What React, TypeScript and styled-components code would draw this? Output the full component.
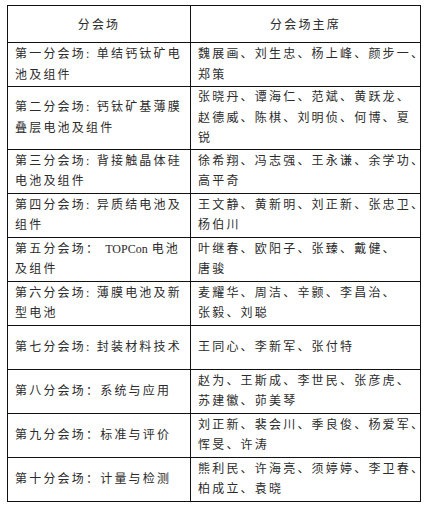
import styled, { createGlobalStyle } from 'styled-components';

const GlobalStyle = createGlobalStyle`
  body {
    margin: 0;
    background: #ffffff;
  }
`;

const Page = styled.div`
  padding: 5px 0 0 7px;
`;

const Table = styled.table`
  width: 414px;
  border-collapse: collapse;
  table-layout: fixed;
  font-family: 'Liberation Serif', 'Noto Sans CJK SC', serif;
  font-size: 12px;
  letter-spacing: 2.2px;
  color: #2b2b2b;
`;

const Th = styled.th<{ $w?: number }>`
  width: ${(p) => (p.$w ? `${p.$w}px` : 'auto')};
  height: 36px;
  border: 1px solid #111;
  font-weight: normal;
  text-align: center;
  vertical-align: middle;
  padding: 0;
`;

const Td = styled.td<{ $tall?: boolean }>`
  height: ${(p) => (p.$tall ? '59px' : '43px')};
  border: 1px solid #111;
  padding: 0 0 0 7px;
  vertical-align: middle;
  text-align: left;
`;

const Line = styled.div`
  line-height: 20.5px;
  white-space: nowrap;
`;

// latin words sit tight, with a gap on each side like the source doc
const Latin = styled.span`
  letter-spacing: 0;
  margin: 0 4px 0 5px;
`;

type Row = { venue: React.ReactNode[]; chairs: string[]; tall?: boolean };

const rows: Row[] = [
  {
    venue: ['第一分会场: 单结钙钛矿电', '池及组件'],
    chairs: ['魏展画、刘生忠、杨上峰、颜步一、', '郑策'],
  },
  {
    venue: ['第二分会场: 钙钛矿基薄膜', '叠层电池及组件'],
    chairs: ['张晓丹、谭海仁、范斌、黄跃龙、', '赵德威、陈棋、刘明侦、何博、夏', '锐'],
    tall: true,
  },
  {
    venue: ['第三分会场: 背接触晶体硅', '电池及组件'],
    chairs: ['徐希翔、冯志强、王永谦、余学功、', '高平奇'],
  },
  {
    venue: ['第四分会场: 异质结电池及', '组件'],
    chairs: ['王文静、黄新明、刘正新、张忠卫、', '杨伯川'],
  },
  {
    venue: [
      <>
        第五分会场：<Latin>TOPCon</Latin>电池
      </>,
      '及组件',
    ],
    chairs: ['叶继春、欧阳子、张臻、戴健、', '唐骏'],
  },
  {
    venue: ['第六分会场: 薄膜电池及新', '型电池'],
    chairs: ['麦耀华、周洁、辛颢、李昌治、', '张毅、刘聪'],
  },
  {
    venue: ['第七分会场: 封装材料技术'],
    chairs: ['王同心、李新军、张付特'],
  },
  {
    venue: ['第八分会场：系统与应用'],
    chairs: ['赵为、王斯成、李世民、张彦虎、', '苏建徽、茆美琴'],
  },
  {
    venue: ['第九分会场：标准与评价'],
    chairs: ['刘正新、裴会川、季良俊、杨爱军、', '恽旻、许涛'],
  },
  {
    venue: ['第十分会场：计量与检测'],
    chairs: ['熊利民、许海亮、须婷婷、李卫春、', '柏成立、袁晓'],
  },
];

export default function App() {
  return (
    <Page>
      <GlobalStyle />
      <Table>
        <thead>
          <tr>
            <Th $w={182}>分会场</Th>
            <Th>分会场主席</Th>
          </tr>
        </thead>
        <tbody>
          {rows.map((r, i) => (
            <tr key={i}>
              <Td $tall={r.tall}>
                {r.venue.map((l, j) => (
                  <Line key={j}>{l}</Line>
                ))}
              </Td>
              <Td $tall={r.tall}>
                {r.chairs.map((l, j) => (
                  <Line key={j}>{l}</Line>
                ))}
              </Td>
            </tr>
          ))}
        </tbody>
      </Table>
    </Page>
  );
}
